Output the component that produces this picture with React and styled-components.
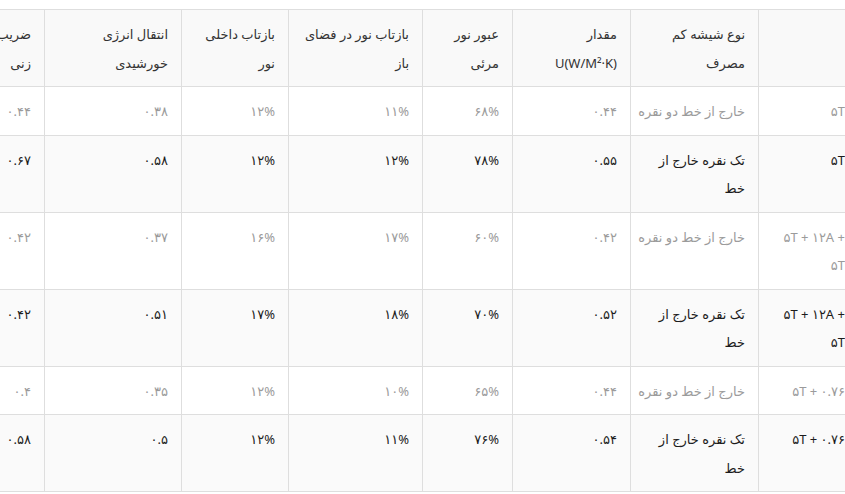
import React from 'react'
import styled, { createGlobalStyle } from 'styled-components'

const GlobalStyle = createGlobalStyle`
  html, body {
    margin: 0;
    padding: 0;
    background: #fff;
    overflow: hidden;
  }
  body {
    font-family: "Noto Sans", "DejaVu Sans", sans-serif;
  }
`;

const Page = styled.div`
  direction: rtl;
  width: 845px;
  height: 494px;
  padding-top: 9px;
  box-sizing: border-box;
  overflow: hidden;
`;

const Table = styled.table`
  border-collapse: collapse;
  table-layout: fixed;
  width: 914px;
  margin-right: -14px;
  font-size: 13px;
  line-height: 28.5px;
`;

const Head = styled.thead`
  background: #f9f9f9;
  color: #333;
`;

const Th = styled.th`
  font-weight: 400;
  text-align: right;
  vertical-align: top;
  white-space: pre;
  padding: 10px 13px 9px;
  border: 1px solid #dedede;
`;

const Row = styled.tr`
  background: ${p => (p.$muted ? '#fff' : '#fafafa')};
  color: ${p => (p.$muted ? '#9b9b9b' : '#1c1c1c')};
`;

const Td = styled.td`
  text-align: right;
  vertical-align: top;
  white-space: pre;
  padding: 10px 13px 9px;
  border: 1px solid #dedede;
`;

const widths = [100, 128, 118, 90, 134, 107, 137, 100];

// line breaks follow the reference layout
const headers = [
  '',
  'نوع شیشه کم\nمصرف',
  'مقدار\nU(W/M²·K)',
  'عبور نور\nمرئی',
  'بازتاب نور در فضای\nباز',
  'بازتاب داخلی\nنور',
  'انتقال انرژی\nخورشیدی',
  'ضریب سایه\nزنی',
];

const single = 'خارج از خط دو نقره';
const silver = 'تک نقره خارج از\nخط';
// LRM keeps the trailing "+" on the left-to-right run
const double = '۵T + ۱۲A +\u200E\n۵T';
const laminated = '۵T + ۰.۷۶';

const rows = [
  ['۵T', single, '۰.۴۴', '۶۸%', '۱۱%', '۱۲%', '۰.۳۸', '۰.۴۴'],
  ['۵T', silver, '۰.۵۵', '۷۸%', '۱۲%', '۱۲%', '۰.۵۸', '۰.۶۷'],
  [double, single, '۰.۴۲', '۶۰%', '۱۷%', '۱۶%', '۰.۳۷', '۰.۴۲'],
  [double, silver, '۰.۵۲', '۷۰%', '۱۸%', '۱۷%', '۰.۵۱', '۰.۴۲'],
  [laminated, single, '۰.۴۴', '۶۵%', '۱۰%', '۱۲%', '۰.۳۵', '۰.۴'],
  [laminated, silver, '۰.۵۴', '۷۶%', '۱۱%', '۱۲%', '۰.۵', '۰.۵۸'],
];

const App = () => {
  return (
    <Page>
      <GlobalStyle />
      <Table>
        <colgroup>
          {widths.map((w, i) => (
            <col key={i} style={{ width: w }} />
          ))}
        </colgroup>
        <Head>
          <tr>
            {headers.map((h, i) => (
              <Th key={i}>{h}</Th>
            ))}
          </tr>
        </Head>
        <tbody>
          {rows.map((r, i) => (
            <Row key={i} $muted={i % 2 === 0}>
              {r.map((c, j) => (
                <Td key={j}>{c}</Td>
              ))}
            </Row>
          ))}
        </tbody>
      </Table>
    </Page>
  )
}

export default App
